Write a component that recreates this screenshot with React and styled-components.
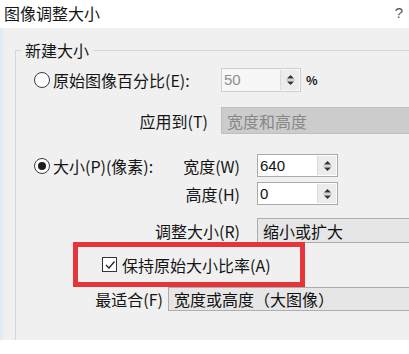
import React from 'react'
import styled, { createGlobalStyle } from 'styled-components'

const GlobalStyle = createGlobalStyle`
  html, body { margin: 0; padding: 0; background: #fff; }
  body {
    font-family: "Noto Sans CJK SC", "Noto Sans", sans-serif;
    color: #151515;
  }
`

const Window = styled.div`
  width: 409px;
  height: 354px;
  overflow: hidden;
  background: #fff;
  display: flex;
  flex-direction: column;
`

const TitleBar = styled.div`
  height: 28px;
  flex: none;
  display: flex;
  align-items: center;
  justify-content: space-between;
  padding: 0 6px 2px 4px;
  box-sizing: border-box;
  font-size: 16px;
  line-height: 16px;
`

const Help = styled.span`
  font-family: "Liberation Sans", sans-serif;
  font-size: 15px;
  color: #555;
`

const Panel = styled.div`
  height: 312px;
  flex: none;
  box-sizing: border-box;
  background: #f0f0f0;
  border-left: 3px solid #dcedf7;
  padding: 14px 0 0 12px;
  overflow: hidden;
`

const GroupBox = styled.fieldset`
  margin: 0;
  padding: 0;
  min-width: 0;
  height: 320px;
  border: 1px solid #d6d6d6;
  border-right: none;
  border-bottom: none;
  display: flex;
  flex-direction: column;
`

const Legend = styled.legend`
  margin-left: 5px;
  padding: 0 4px;
  font-size: 16px;
  line-height: 16px;
`

const Row = styled.div`
  display: flex;
  align-items: center;
  height: ${p => p.$h}px;
  margin-top: ${p => p.$top}px;
  padding-left: ${p => p.$indent || 0}px;
  font-size: 16px;
  line-height: 16px;
  white-space: nowrap;
`

const Option = styled.label`
  display: flex;
  align-items: center;
  gap: 3px;
  width: ${p => p.$w}px;
  flex: none;
`

const RadioDot = styled.span`
  width: 16px;
  height: 16px;
  box-sizing: border-box;
  border-radius: 50%;
  border: 1.5px solid #3a3a3a;
  background: #fff;
  display: flex;
  align-items: center;
  justify-content: center;
  flex: none;
  &::after {
    content: '';
    width: 8px;
    height: 8px;
    border-radius: 50%;
    background: ${p => (p.$checked ? '#1e1e1e' : 'transparent')};
  }
`

const FieldLabel = styled.span`
  width: ${p => p.$w}px;
  flex: none;
  box-sizing: border-box;
  padding-right: ${p => p.$pad}px;
  text-align: right;
`

const SpinBox = styled.div`
  width: ${p => p.$w}px;
  height: 100%;
  box-sizing: border-box;
  flex: none;
  display: flex;
  align-items: stretch;
  background: ${p => (p.$disabled ? '#f7f7f7' : '#fff')};
  border: 1px solid ${p => (p.$disabled ? '#cfcfcf' : '#a9a9a9')};
`

const SpinValue = styled.span`
  flex: 1;
  display: flex;
  align-items: center;
  padding-left: 2px;
  font-family: "Liberation Sans", Arial, sans-serif;
  font-size: 15px;
  color: ${p => (p.$disabled ? '#8e8e8e' : '#111')};
`

const SpinButtons = styled.span`
  width: 18px;
  margin: 1px;
  display: flex;
  align-items: center;
  justify-content: center;
  background: #ececec;
  border-left: 1px solid #dadada;
`

const Unit = styled.span`
  margin-left: 5px;
  font-size: 12px;
  font-weight: bold;
`

const Dropdown = styled.div`
  flex: 1;
  height: 100%;
  margin-right: -6px;
  box-sizing: border-box;
  display: flex;
  align-items: center;
  padding-left: 5px;
  background: ${p => (p.$disabled ? '#cccccc' : '#e6e6e6')};
  border: 1px solid ${p => (p.$disabled ? '#bfbfbf' : '#adadad')};
  color: ${p => (p.$disabled ? '#878787' : '#111')};
`

const Highlight = styled.div`
  width: 232px;
  height: 45px;
  margin: -1px 0 0 57px;
  box-sizing: border-box;
  border: 5px solid #e63538;
  display: flex;
  align-items: center;
  padding-left: 24px;
  font-size: 16px;
  line-height: 16px;
  white-space: nowrap;
  gap: 5px;
`

const CheckBox = styled.span`
  width: 15px;
  height: 15px;
  box-sizing: border-box;
  border: 1px solid #333;
  background: #fff;
  display: flex;
  align-items: center;
  justify-content: center;
  flex: none;
`

const SpinArrows = () => (
  <svg width="9" height="14" viewBox="0 0 9 14">
    <path d="M4.5 2 L8 5.5 H1 Z" fill="#333" />
    <line x1="0" y1="7" x2="9" y2="7" stroke="#bdbdbd" />
    <path d="M1 8.5 H8 L4.5 12 Z" fill="#333" />
  </svg>
)

const Spinner = ({ value, width, disabled }) => (
  <SpinBox $w={width} $disabled={disabled}>
    <SpinValue $disabled={disabled}>{value}</SpinValue>
    <SpinButtons>
      <SpinArrows />
    </SpinButtons>
  </SpinBox>
)

export default function App() {
  return (
    <Window>
      <GlobalStyle />
      <TitleBar>
        <span>图像调整大小</span>
        <Help>?</Help>
      </TitleBar>
      <Panel>
        <GroupBox>
          <Legend>新建大小</Legend>

          <Row $h={24} $top={10} $indent={18}>
            <Option $w={187}>
              <RadioDot />
              原始图像百分比(E):
            </Option>
            <Spinner value="50" width={80} disabled />
            <Unit>%</Unit>
          </Row>

          <Row $h={27} $top={15}>
            <FieldLabel $w={205} $pad={13}>应用到(T)</FieldLabel>
            <Dropdown $disabled>宽度和高度</Dropdown>
          </Row>

          <Row $h={23} $top={20} $indent={18}>
            <Option $w={149}>
              <RadioDot $checked />
              大小(P)(像素):
            </Option>
            <FieldLabel $w={74} $pad={17}>宽度(W)</FieldLabel>
            <Spinner value="640" width={81} />
          </Row>

          <Row $h={23} $top={5}>
            <FieldLabel $w={241} $pad={17}>高度(H)</FieldLabel>
            <Spinner value="0" width={81} />
          </Row>

          <Row $h={25} $top={13}>
            <FieldLabel $w={241} $pad={17}>调整大小(R)</FieldLabel>
            <Dropdown>缩小或扩大</Dropdown>
          </Row>

          <Highlight>
            <CheckBox>
              <svg width="12" height="12" viewBox="0 0 12 12">
                <path d="M2 6 L5 9 L10.5 2.5" fill="none" stroke="#222" strokeWidth="1.3" />
              </svg>
            </CheckBox>
            保持原始大小比率(A)
          </Highlight>

          <Row $h={24} $top={0}>
            <FieldLabel $w={152} $pad={5}>最适合(F)</FieldLabel>
            <Dropdown>宽度或高度（大图像）</Dropdown>
          </Row>
        </GroupBox>
      </Panel>
    </Window>
  )
}
